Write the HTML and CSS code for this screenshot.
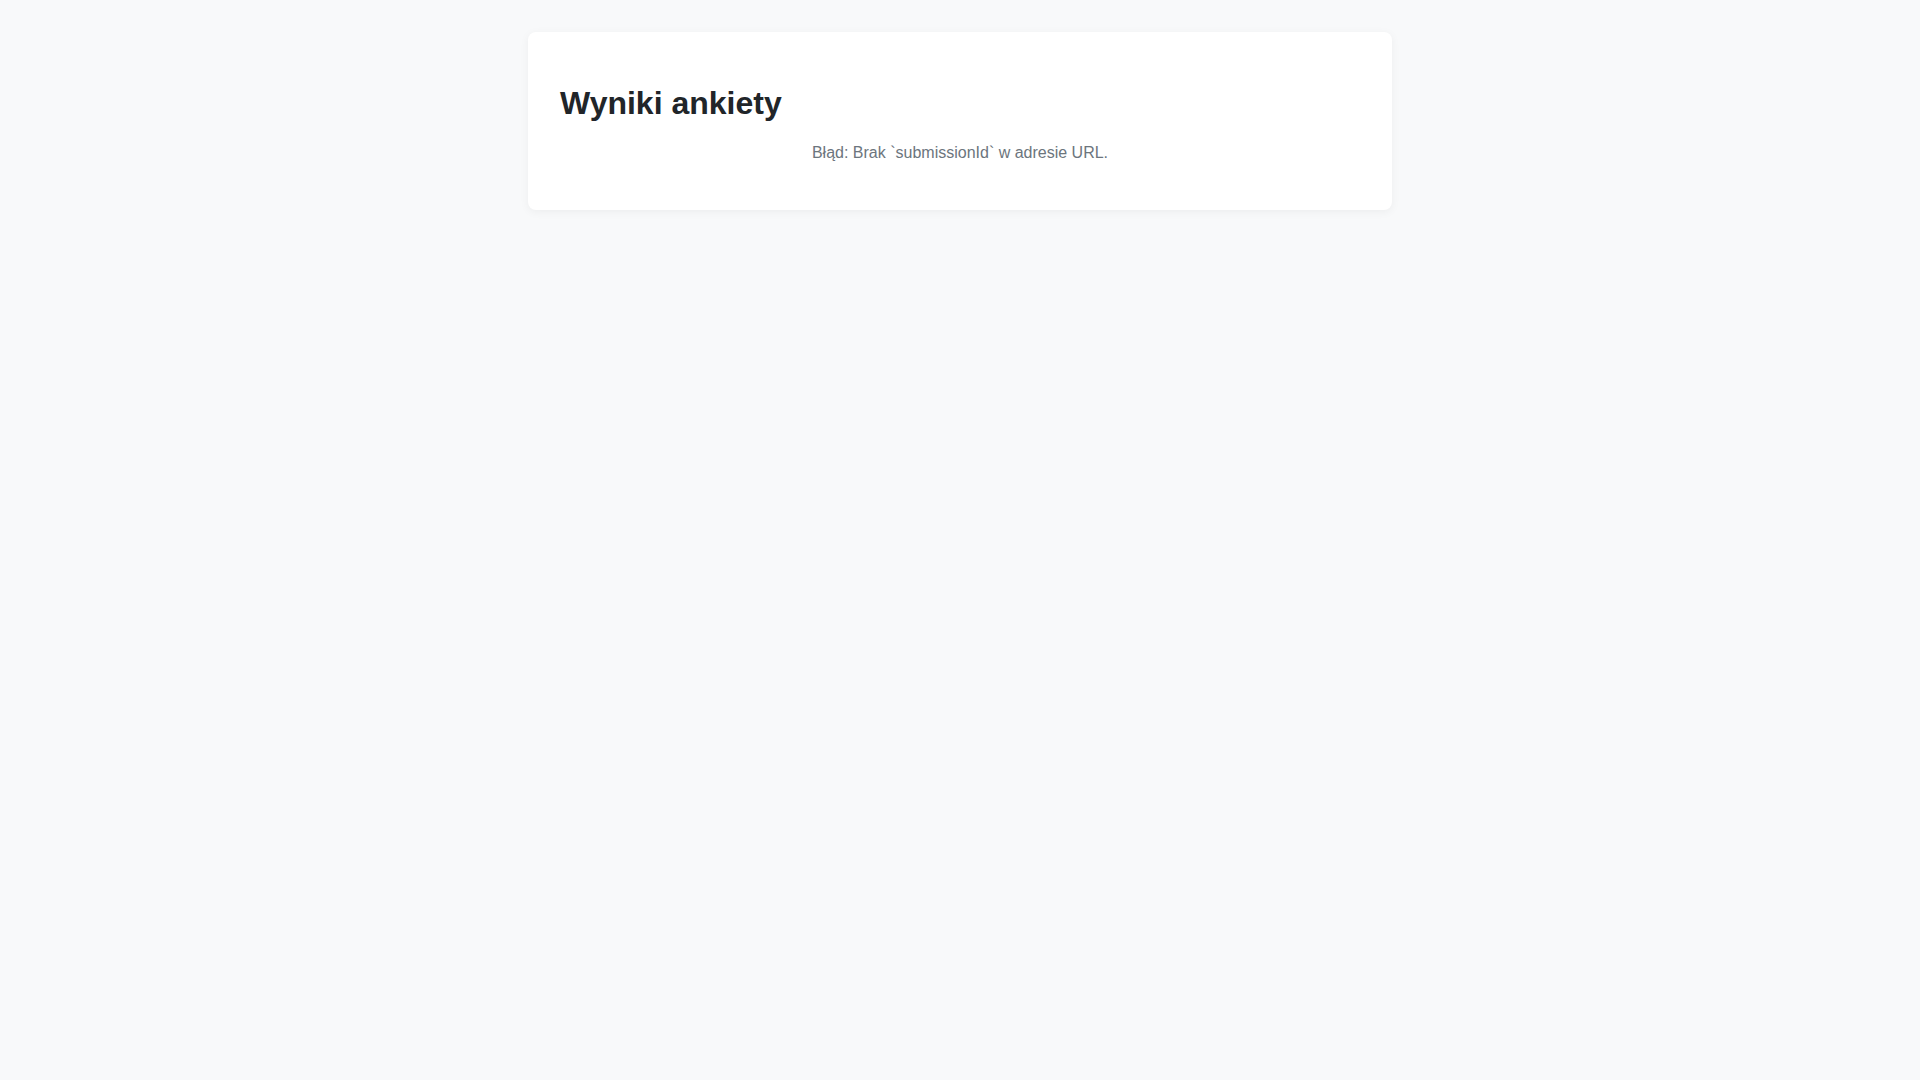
FILE: index.html
```html
<!DOCTYPE html>
<html lang="pl">
<head>
    <meta charset="UTF-8">
    <meta name="viewport" content="width=device-width, initial-scale=1.0">
    <title>Wyniki ankiety</title>
    <link rel="stylesheet" href="styles.css">
</head>
<body>
    <div class="container">
        <h1>Wyniki ankiety</h1>
        <p class="error">Błąd: Brak `submissionId` w adresie URL.</p>
    </div>
</body>
</html>
```

FILE: styles.css
```css
/* ogólny wygląd strony */
body {
    font-family: "Liberation Sans", Arial, sans-serif;
    background-color: #f8f9fa;
    color: #212529;
    margin: 0;
}
.container {
    background-color: #ffffff;
    border-radius: 8px;
    box-shadow: 0 2px 10px rgba(0, 0, 0, 0.05);
    padding: 32px;
    margin: 32px auto;
    max-width: 800px;
}
h1 {
    font-size: 32px;
    margin: 0.67em 0;
    color: #212529;
}
/* komunikat o błędzie */
.error {
    text-align: center;
    color: #6c757d;
    font-size: 16px;
    margin: 16px 0;
}
```
